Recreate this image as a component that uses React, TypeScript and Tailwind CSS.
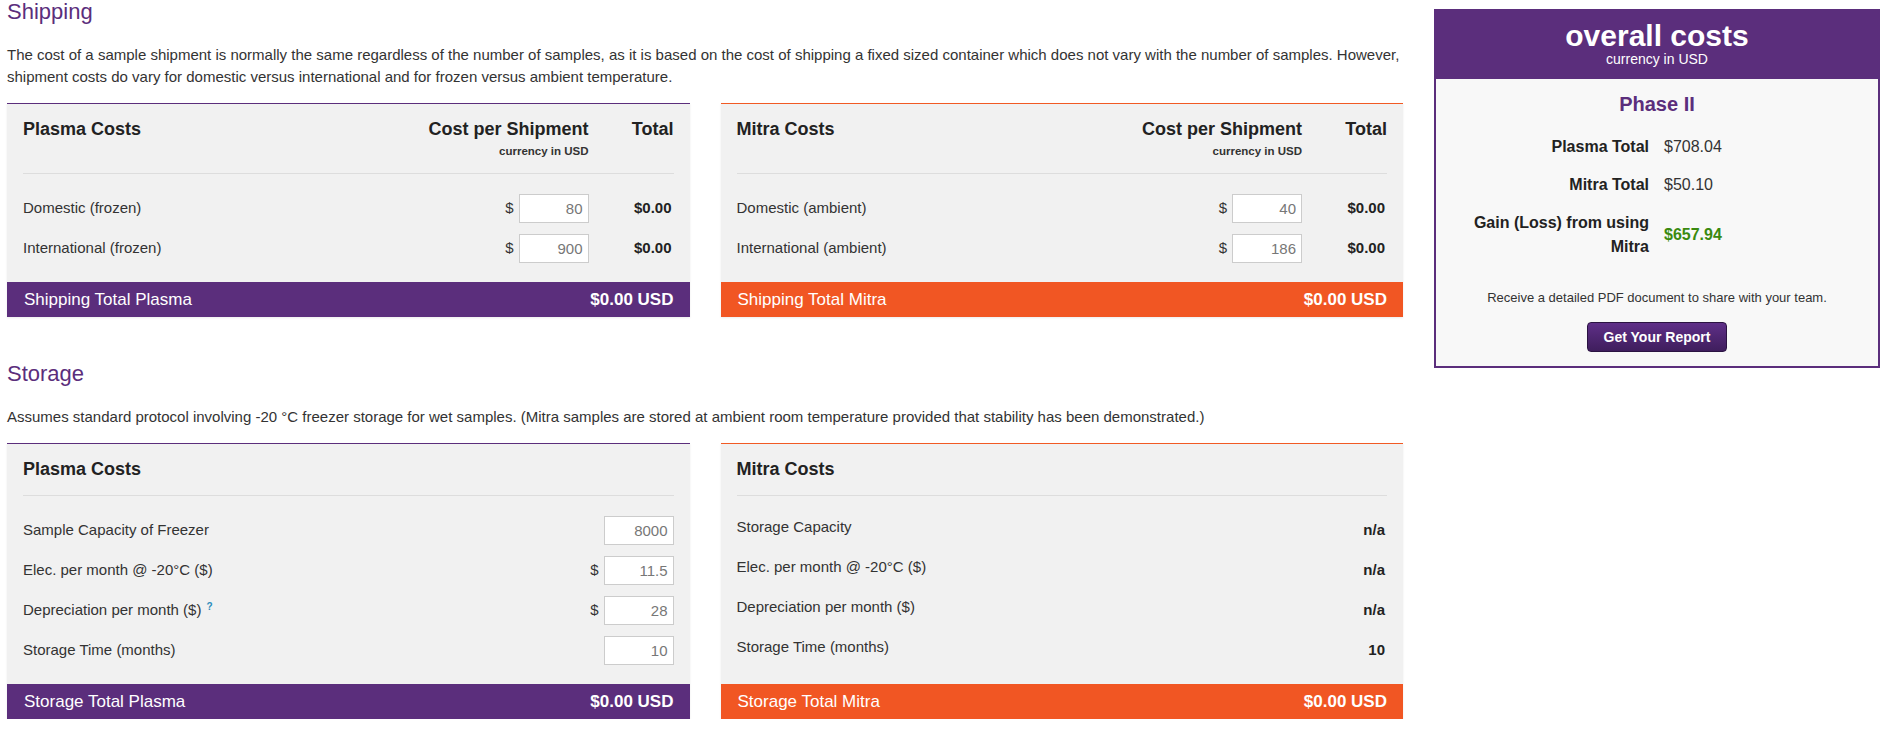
import React from 'react';

type Accent = 'plasma' | 'mitra';

const topBorder: Record<Accent, string> = {
  plasma: 'border-[#5b2e7c]',
  mitra: 'border-[#f15a24]',
};

const footerBg: Record<Accent, string> = {
  plasma: 'bg-[#5b2e7c]',
  mitra: 'bg-[#f15623]',
};

const AmountInput = ({ value }: { value: string }) => (
  <input
    readOnly
    defaultValue={value}
    className="h-[29px] w-[70px] border border-[#cccccc] bg-white pr-[5px] text-right text-[15px] text-[#777] outline-none"
  />
);

interface CostCardProps {
  accent: Accent;
  header: React.ReactNode;
  footer: string;
  children: React.ReactNode;
}

function CostCard({ accent, header, footer, children }: CostCardProps) {
  return (
    <div className={`flex-1 border-t bg-[#f1f1f1] shadow-[0_1px_2px_rgba(0,0,0,0.08)] ${topBorder[accent]}`}>
      {/* Header */}
      <div className="px-4 pt-[14px]">
        {header}
        <div className="mt-[15px] border-t border-[#dddddd]" />
      </div>

      {/* Rows */}
      <div className="flex flex-col gap-[11px] px-4 pt-[20px] pb-[19px]">{children}</div>

      {/* Footer */}
      <div className={`flex h-[35px] items-center justify-between pl-[17px] pr-4 text-[17px] text-white ${footerBg[accent]}`}>
        <span>{footer}</span>
        <span className="font-bold">$0.00 USD</span>
      </div>
    </div>
  );
}

const ShippingHeader = ({ title }: { title: string }) => (
  <div className="flex items-start text-[18px] font-bold leading-[22px] text-[#222]">
    <div className="flex-1">{title}</div>
    <div className="text-right">
      Cost per Shipment
      <div className="mt-[4px] text-[11.5px] leading-[14px] text-[#333]">currency in USD</div>
    </div>
    <div className="w-[85px] text-right">Total</div>
  </div>
);

const ShippingRow = ({ label, value }: { label: string; value: string }) => (
  <div className="flex h-[29px] items-center text-[15px] text-[#333]">
    <span className="flex-1">{label}</span>
    <span className="mr-[5px]">$</span>
    <AmountInput value={value} />
    <span className="w-[85px] pr-[2px] text-right font-bold text-[#222]">$0.00</span>
  </div>
);

const StorageHeader = ({ title }: { title: string }) => (
  <div className="text-[18px] font-bold leading-[22px] text-[#222]">{title}</div>
);

const plasmaStorage = [
  { label: 'Sample Capacity of Freezer', value: '8000', dollar: false, hint: false },
  { label: 'Elec. per month @ -20°C ($)', value: '11.5', dollar: true, hint: false },
  { label: 'Depreciation per month ($)', value: '28', dollar: true, hint: true },
  { label: 'Storage Time (months)', value: '10', dollar: false, hint: false },
];

const mitraStorage = [
  { label: 'Storage Capacity', value: 'n/a' },
  { label: 'Elec. per month @ -20°C ($)', value: 'n/a' },
  { label: 'Depreciation per month ($)', value: 'n/a' },
  { label: 'Storage Time (months)', value: '10' },
];

function SummaryRow({ label, children }: { label: string; children: React.ReactNode }) {
  return (
    <>
      <div className="text-right text-[16px] font-bold leading-[24px] text-[#222]">{label}</div>
      <div className="self-center text-[16px] leading-[24px] text-[#333]">{children}</div>
    </>
  );
}

export default function App() {
  return (
    <div className="flex pl-[7px] font-['Liberation_Sans',Arial,sans-serif]">
      {/* Main column */}
      <div className="w-[1396px] shrink-0">
        <h2 className="text-[22px] leading-[24px] text-[#5b2e7c]">Shipping</h2>
        <p className="mt-[20px] text-[15px] leading-[22px] text-[#333]">
          The cost of a sample shipment is normally the same regardless of the number of samples, as it is based on the cost of shipping a fixed sized container which does not vary with the number of samples. However, shipment costs do vary for domestic versus international and for frozen versus ambient temperature.
        </p>

        <div className="mt-[15px] flex gap-[31px]">
          <CostCard accent="plasma" header={<ShippingHeader title="Plasma Costs" />} footer="Shipping Total Plasma">
            <ShippingRow label="Domestic (frozen)" value="80" />
            <ShippingRow label="International (frozen)" value="900" />
          </CostCard>
          <CostCard accent="mitra" header={<ShippingHeader title="Mitra Costs" />} footer="Shipping Total Mitra">
            <ShippingRow label="Domestic (ambient)" value="40" />
            <ShippingRow label="International (ambient)" value="186" />
          </CostCard>
        </div>

        <h2 className="mt-[45px] text-[22px] leading-[24px] text-[#5b2e7c]">Storage</h2>
        <p className="mt-[20px] text-[15px] leading-[22px] text-[#333]">
          Assumes standard protocol involving -20 °C freezer storage for wet samples. (Mitra samples are stored at ambient room temperature provided that stability has been demonstrated.)
        </p>

        <div className="mt-[15px] flex gap-[31px]">
          <CostCard accent="plasma" header={<StorageHeader title="Plasma Costs" />} footer="Storage Total Plasma">
            {plasmaStorage.map((row) => (
              <div key={row.label} className="flex h-[29px] items-center text-[15px] text-[#333]">
                <span className="flex-1">
                  {row.label}
                  {row.hint && (
                    <sup className="ml-[5px] text-[10px] font-bold text-[#2a8cbb]">?</sup>
                  )}
                </span>
                {row.dollar && <span className="mr-[5px]">$</span>}
                <AmountInput value={row.value} />
              </div>
            ))}
          </CostCard>
          <CostCard accent="mitra" header={<StorageHeader title="Mitra Costs" />} footer="Storage Total Mitra">
            {mitraStorage.map((row) => (
              <div key={row.label} className="flex h-[29px] text-[15px] text-[#333]">
                <span className="flex-1 self-start leading-[21px]">{row.label}</span>
                <span className="self-center pr-[2px] font-bold text-[#222]">{row.value}</span>
              </div>
            ))}
          </CostCard>
        </div>
      </div>

      {/* Overall costs */}
      <aside className="mt-[9px] ml-[31px] w-[446px] shrink-0 self-start border-2 border-[#5b2e7c] bg-[#f8f8f8]">
        <div className="h-[68px] bg-[#5b2e7c] pt-[10px] text-center text-white">
          <div className="text-[30px] font-bold leading-[30px]">overall costs</div>
          <div className="text-[14px] leading-[16px]">currency in USD</div>
        </div>
        <div className="pt-[13px] pb-[14px] text-center">
          <div className="text-[20px] font-bold leading-[24px] text-[#5b2e7c]">Phase II</div>
          <div className="mt-[19px] grid grid-cols-[198px_1fr] gap-x-[15px] gap-y-[14px] pl-[15px] text-left">
            <SummaryRow label="Plasma Total">$708.04</SummaryRow>
            <SummaryRow label="Mitra Total">$50.10</SummaryRow>
            <SummaryRow label="Gain (Loss) from using Mitra">
              <span className="font-bold text-[#3a8a0f]">$657.94</span>
            </SummaryRow>
          </div>
          <p className="mt-[29px] text-[13px] leading-[20px] text-[#333]">
            Receive a detailed PDF document to share with your team.
          </p>
          <button className="mt-[14px] h-[30px] w-[140px] rounded-[4px] border border-[#2b1342] bg-gradient-to-b from-[#5f2f88] to-[#3f1e5d] text-[14px] font-bold text-white">
            Get Your Report
          </button>
        </div>
      </aside>
    </div>
  );
}
